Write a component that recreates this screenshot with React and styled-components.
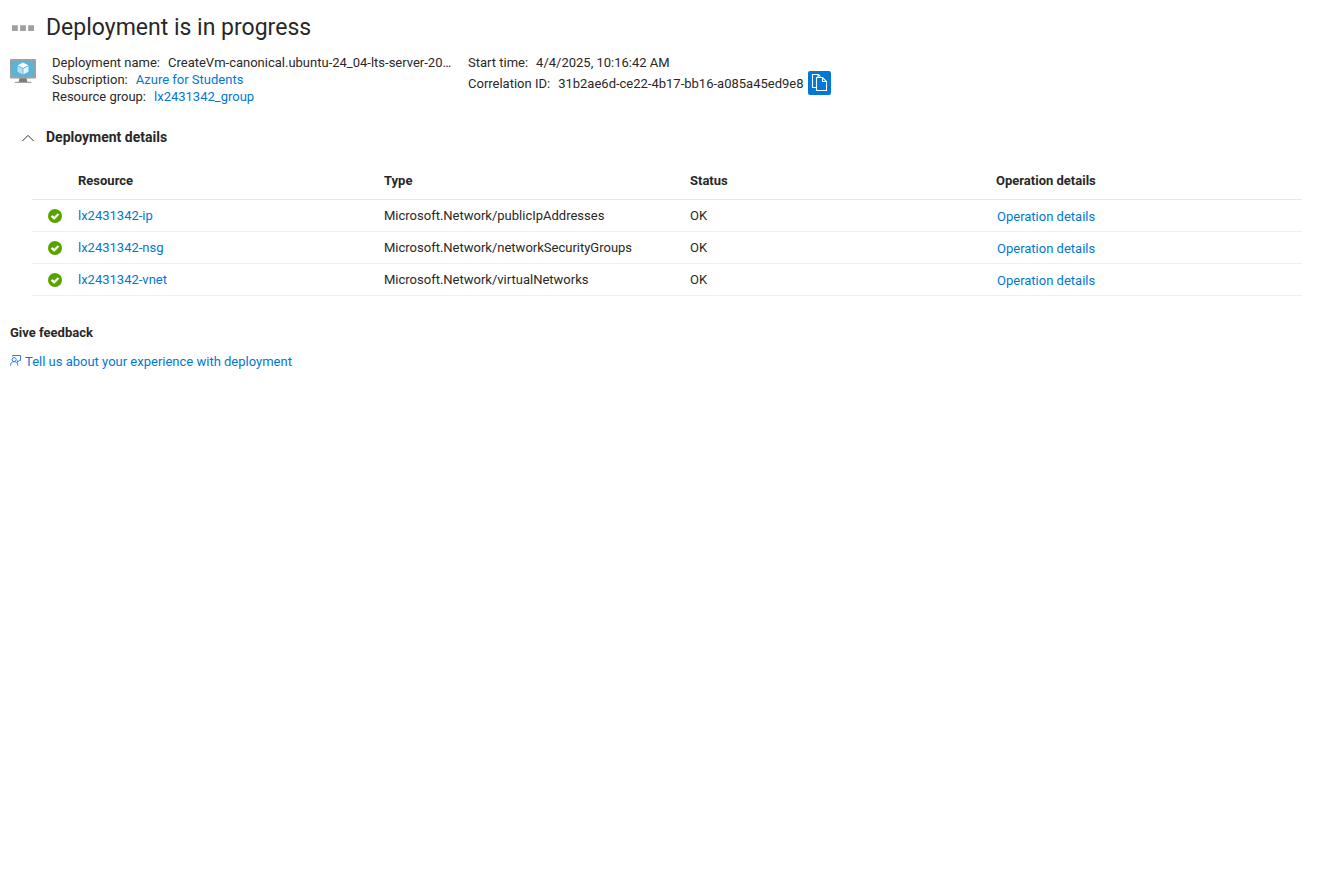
import React from "react";
import styled, { createGlobalStyle } from "styled-components";

const GlobalStyle = createGlobalStyle`
  * { box-sizing: border-box; }
  body {
    margin: 0;
    background: #fff;
    color: #292827;
    font: 13px/17px Roboto, "Liberation Sans", sans-serif;
  }
`;

const Page = styled.main`
  display: flex;
  flex-direction: column;
  min-height: 881px;
`;

const Header = styled.header`
  display: flex;
  align-items: center;
  height: 54px;
  padding-left: 12px;
  gap: 12px;
`;

const Progress = styled.div`
  display: flex;
  padding-top: 2px;
  svg { display: block; }
`;

const Title = styled.h1`
  margin: 0;
  padding-top: 2px;
  font-size: 23px;
  line-height: 32px;
  font-weight: 400;
`;

const Summary = styled.section`
  display: flex;
  padding-left: 10px;
`;

const SummaryIcon = styled.div`
  width: 42px;
  padding-top: 4px;
  svg { display: block; }
`;

const FieldColumn = styled.div`
  width: ${(p) => p.$width || "auto"};
`;

const Field = styled.div`
  display: flex;
  align-items: center;
  height: ${(p) => p.$height || 17}px;
  white-space: nowrap;
`;

const FieldLabel = styled.span`
  margin-right: 8px;
`;

const Link = styled.a`
  color: #0078d4;
  text-decoration: none;
`;

const CopyButton = styled.button`
  display: flex;
  align-items: center;
  justify-content: center;
  width: 23px;
  height: 24px;
  margin-left: 5px;
  padding: 0;
  border: 0;
  border-radius: 2px;
  background: #0078d4;
`;

const SectionToggle = styled.div`
  display: flex;
  align-items: center;
  height: 20px;
  margin-top: 22px;
  padding-left: 22px;
  gap: 12px;
`;

const SectionTitle = styled.h2`
  margin: 0;
  font-size: 14px;
  line-height: 20px;
  font-weight: 700;
`;

const Table = styled.div`
  width: 1270px;
  margin: 14px 0 0 32px;
`;

const Row = styled.div`
  display: grid;
  grid-template-columns: 46px 306px 306px 306px 1fr;
  align-items: center;
  height: ${(p) => (p.$head ? 39 : 32)}px;
  border-bottom: 1px solid ${(p) => (p.$head ? "#e8e8e8" : "#f0f0f0")};
  font-weight: ${(p) => (p.$head ? 700 : 400)};
`;

const StatusCell = styled.div`
  padding: 1px 0 0 16px;
  svg { display: block; }
`;

const Cell = styled.div`
  white-space: nowrap;
`;

const ActionCell = styled(Cell)`
  padding: 2px 0 0 1px;
`;

const FeedbackTitle = styled.h3`
  margin: 28px 0 0 10px;
  font-size: 13px;
  line-height: 17px;
  font-weight: 700;
`;

const FeedbackLink = styled(Link)`
  display: flex;
  align-items: center;
  gap: 4px;
  height: 17px;
  margin: 12px 0 0 10px;
  svg { margin-bottom: 2px; }
`;

const ProgressIcon = () => (
  <svg width="22" height="6" viewBox="0 0 22 6" fill="#a0a0a0">
    <path d="M0 .2h5.8V6H0zM8.1.2h5.8V6H8.1zM16.2.2H22V6h-5.8z" />
  </svg>
);

const VmIcon = () => (
  <svg width="26" height="26" viewBox="0 0 26 26">
    <path d="M9.5 20h7l.8 4H8.7z" fill="#7a7a7a" />
    <path d="M4.5 25q0-1.3 1.4-1.3h14.2q1.4 0 1.400 1.300z" fill="#a0a0a0" />
    <rect y="1" width="26" height="19.4" rx="1" fill="#a0a0a0" />
    <rect x="1.8" y="2.8" width="22.4" height="15.6" fill="#59b4d9" />
    <path d="M13 4.4l5.3 2.8L13 10 7.7 7.200z" fill="#fff" />
    <path d="M7.5 8l5.1 2.7v5.7l-5.1-2.700z" fill="#b9e0f0" />
    <path d="M18.5 8l-5.1 2.7v5.7l5.1-2.700z" fill="#e2f3f9" />
  </svg>
);

const CopyIcon = () => (
  <svg width="17" height="18" viewBox="0 0 17 18" fill="none" stroke="#fff" strokeWidth="1.1">
    <path d="M5 13.5H1.5v-13h5.8l2.2 2.2M7 .7v3" />
    <path d="M5.5 3.5h6l4 4v9h-10zM11.5 3.5v4h4" />
  </svg>
);

const ChevronUp = () => (
  <svg width="12" height="10" viewBox="0 0 12 10" fill="none" stroke="#323130" strokeWidth="1">
    <path d="M.4 9L6 3.4l5.6 5.6" />
  </svg>
);

const SuccessIcon = () => (
  <svg width="14" height="14" viewBox="0 0 14 14">
    <circle cx="7" cy="7" r="7" fill="#57a300" />
    <path d="M3.6 6.9l2.5 2.5 4.3-4.5" fill="none" stroke="#fff" strokeWidth="2.2" />
  </svg>
);

const FeedbackIcon = () => (
  <svg width="11" height="13" viewBox="0 0 11 13" fill="none" stroke="#2f7fe0" strokeWidth="1">
    <path d="M2.5 2.500v-1h8v5H9.300L7.500 8.200V6.500" />
    <circle cx="4.2" cy="5.6" r="2" />
    <path d="M.5 11.6c0-2.6 1.5-4 3.7-4s3.5 1.4 3.7 4" />
  </svg>
);

const resources = [
  { name: "lx2431342-ip", type: "Microsoft.Network/publicIpAddresses" },
  { name: "lx2431342-nsg", type: "Microsoft.Network/networkSecurityGroups" },
  { name: "lx2431342-vnet", type: "Microsoft.Network/virtualNetworks" },
];

export default function App() {
  return (
    <Page>
      <GlobalStyle />
      <Header>
        <Progress><ProgressIcon /></Progress>
        <Title>Deployment is in progress</Title>
      </Header>
      <Summary>
        <SummaryIcon><VmIcon /></SummaryIcon>
        <FieldColumn $width="416px">
          <Field>
            <FieldLabel>Deployment name:</FieldLabel>
            <span>CreateVm-canonical.ubuntu-24_04-lts-server-20…</span>
          </Field>
          <Field>
            <FieldLabel>Subscription:</FieldLabel>
            <Link>Azure for Students</Link>
          </Field>
          <Field>
            <FieldLabel>Resource group:</FieldLabel>
            <Link>lx2431342_group</Link>
          </Field>
        </FieldColumn>
        <FieldColumn>
          <Field>
            <FieldLabel>Start time:</FieldLabel>
            <span>4/4/2025, 10:16:42 AM</span>
          </Field>
          <Field $height={24}>
            <FieldLabel>Correlation ID:</FieldLabel>
            <span>31b2ae6d-ce22-4b17-bb16-a085a45ed9e8</span>
            <CopyButton aria-label="Copy"><CopyIcon /></CopyButton>
          </Field>
        </FieldColumn>
      </Summary>
      <SectionToggle>
        <ChevronUp />
        <SectionTitle>Deployment details</SectionTitle>
      </SectionToggle>
      <Table>
        <Row $head>
          <span />
          <Cell>Resource</Cell>
          <Cell>Type</Cell>
          <Cell>Status</Cell>
          <Cell>Operation details</Cell>
        </Row>
        {resources.map((r) => (
          <Row key={r.name}>
            <StatusCell><SuccessIcon /></StatusCell>
            <Cell><Link>{r.name}</Link></Cell>
            <Cell>{r.type}</Cell>
            <Cell>OK</Cell>
            <ActionCell><Link>Operation details</Link></ActionCell>
          </Row>
        ))}
      </Table>
      <FeedbackTitle>Give feedback</FeedbackTitle>
      <FeedbackLink>
        <FeedbackIcon />
        <span>Tell us about your experience with deployment</span>
      </FeedbackLink>
    </Page>
  );
}
